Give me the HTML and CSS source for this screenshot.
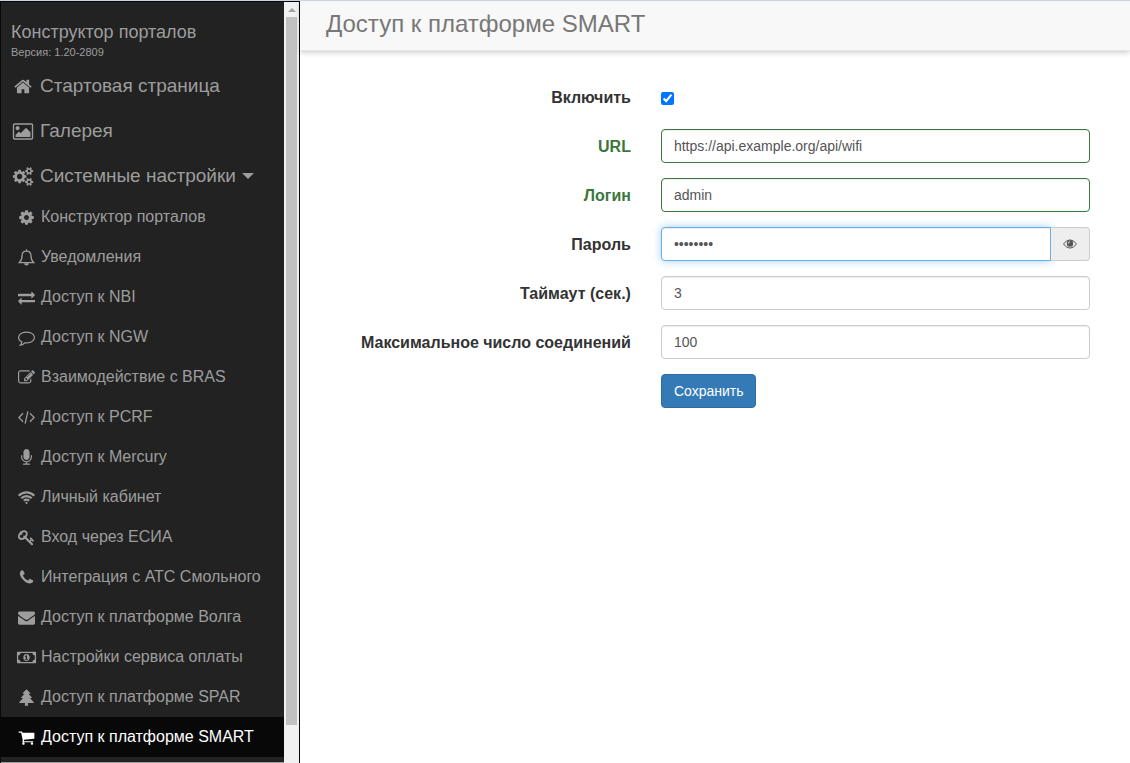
FILE: index.html
```
<!DOCTYPE html>
<html lang="ru">
<head>
    <meta charset="UTF-8">
    <meta name="viewport" content="width=device-width, initial-scale=1.0">
    <title>Доступ к платформе SMART</title>
    <link rel="stylesheet" href="styles.css">
</head>
<body>
    <aside class="sidebar">
        <nav class="sidebar-nav">
            <div class="brand">
                <a href="#" class="brand-name">Конструктор порталов</a>
                <div class="brand-version">Версия: 1.20-2809</div>
            </div>

            <ul class="menu">
                <li><a href="#"><svg class="icon" viewBox="0 0 1792 1792"><path d="M1472 992v480q0 26-19 45t-45 19h-384v-384h-256v384h-384q-26 0-45-19t-19-45v-480q0-1 .5-3t.5-3l575-474 575 474q1 2 1 6zm223-69l-62 74q-8 9-21 11h-3q-13 0-21-7l-692-577-692 577q-12 8-24 7-13-2-21-11l-62-74q-8-10-7-23.5t11-21.5l719-599q32-26 76-26t76 26l244 204v-195q0-14 9-23t23-9h192q14 0 23 9t9 23v408l219 182q10 8 11 21.5t-7 23.5z"/></svg>Стартовая страница</a></li>
                <li><a href="#"><svg class="icon" viewBox="0 0 1920 1792"><path d="M640 576q0 80-56 136t-136 56-136-56-56-136 56-136 136-56 136 56 56 136zm1024 384v448h-1408v-192l320-320 160 160 512-512zm96-704h-1600q-13 0-22.5 9.5t-9.5 22.5v1216q0 13 9.5 22.5t22.5 9.5h1600q13 0 22.5-9.5t9.5-22.5v-1216q0-13-9.5-22.5t-22.5-9.5zm160 32v1216q0 66-47 113t-113 47h-1600q-66 0-113-47t-47-113v-1216q0-66 47-113t113-47h1600q66 0 113 47t47 113z"/></svg>Галерея</a></li>
                <li><a href="#"><svg class="icon" viewBox="0 0 1920 1792"><path d="M896 896q0-106-75-181t-181-75-181 75-75 181 75 181 181 75 181-75 75-181zm768 512q0-52-38-90t-90-38-90 38-38 90q0 53 37.5 90.5t90.5 37.5 90.5-37.5 37.5-90.5zm0-1024q0-52-38-90t-90-38-90 38-38 90q0 53 37.5 90.5t90.5 37.5 90.5-37.5 37.5-90.5zm-384 421v185q0 10-7 19.5t-16 10.5l-155 24q-11 35-32 76 34 48 90 115 7 11 7 20 0 12-7 19-23 30-82.5 89.5t-78.5 59.5q-11 0-21-7l-115-90q-37 19-77 31-11 108-23 155-7 24-30 24h-186q-11 0-20-7.5t-10-17.5l-23-153q-34-10-75-31l-118 89q-7 7-20 7-11 0-21-8-144-133-144-160 0-9 7-19 10-14 41-53t47-61q-23-44-35-82l-152-24q-10-1-17-9.5t-7-19.5v-185q0-10 7-19.5t16-10.5l155-24q11-35 32-76-34-48-90-115-7-11-7-20 0-12 7-20 22-30 82-89t79-59q11 0 21 7l115 90q34-18 77-32 11-108 23-154 7-24 30-24h186q11 0 20 7.5t10 17.5l23 153q34 10 75 31l118-89q8-7 20-7 11 0 21 8 144 133 144 160 0 8-7 19-12 16-42 54t-45 60q23 48 34 82l152 23q10 2 17 10.5t7 19.5zm640 533v140q0 16-149 31-12 27-30 52 51 113 51 138 0 4-4 7-122 71-124 71-8 0-46-47t-52-68q-20 2-30 2t-30-2q-14 21-52 68t-46 47q-2 0-124-71-4-3-4-7 0-25 51-138-18-25-30-52-149-15-149-31v-140q0-16 149-31 13-29 30-52-51-113-51-138 0-4 4-7 4-2 35-20t59-34 30-16q8 0 46 46.5t52 67.5q20-2 30-2t30 2q51-71 92-112l6-2q4 0 124 70 4 3 4 7 0 25-51 138 17 23 30 52 149 15 149 31zm0-1024v140q0 16-149 31-12 27-30 52 51 113 51 138 0 4-4 7-122 71-124 71-8 0-46-47t-52-68q-20 2-30 2t-30-2q-14 21-52 68t-46 47q-2 0-124-71-4-3-4-7 0-25 51-138-18-25-30-52-149-15-149-31v-140q0-16 149-31 13-29 30-52-51-113-51-138 0-4 4-7 4-2 35-20t59-34 30-16q8 0 46 46.5t52 67.5q20-2 30-2t30 2q51-71 92-112l6-2q4 0 124 70 4 3 4 7 0 25-51 138 17 23 30 52 149 15 149 31z"/></svg>Системные настройки<span class="caret"></span></a></li>
            </ul>

            <ul class="submenu">
                <li><a href="#"><svg class="icon" viewBox="0 0 1792 1792"><path d="M1152 896q0-106-75-181t-181-75-181 75-75 181 75 181 181 75 181-75 75-181zm512-109v222q0 12-8 23t-20 13l-185 28q-19 54-39 91 35 50 107 138 10 12 10 25t-9 23q-27 37-99 108t-94 71q-12 0-26-9l-138-108q-44 23-91 38-16 136-29 186-7 28-36 28h-222q-14 0-24.5-8.5t-11.5-21.5l-28-184q-49-16-90-37l-141 107q-10 9-25 9-14 0-25-11-126-114-165-168-7-10-7-23 0-12 8-23 15-21 51-66.5t54-70.5q-27-50-41-99l-183-27q-13-2-21-12.5t-8-23.5v-222q0-12 8-23t19-13l186-28q14-46 39-92-40-57-107-138-10-12-10-24 0-10 9-23 26-36 98.5-107.5t94.5-71.5q13 0 26 10l138 107q44-23 91-38 16-136 29-186 7-28 36-28h222q14 0 24.5 8.5t11.5 21.5l28 184q49 16 90 37l142-107q9-9 24-9 13 0 25 10 129 119 165 170 7 8 7 22 0 12-8 23-15 21-51 66.5t-54 70.5q26 50 41 98l183 28q13 2 21 12.5t8 23.5z"/></svg>Конструктор порталов</a></li>
                <li><a href="#"><svg class="icon" viewBox="0 0 16 16"><path class="line" d="M8 .3v1.6M1.200 12.900c2-1.800 2.600-4.100 2.600-6.500C3.800 3.800 5.600 2 8 2s4.200 1.800 4.200 4.400c0 2.400.6 4.700 2.600 6.500z"/><path d="M5.800 13.300h4.400a2.200 2.200 0 0 1-4.400 0z"/></svg>Уведомления</a></li>
                <li><a href="#"><svg class="icon" viewBox="0 0 1792 1792"><path d="M1792 1184v192q0 13-9.500 22.500t-22.500 9.500h-1376v192q0 13-9.500 22.500t-22.500 9.500q-12 0-24-10l-319-320q-9-9-9-22 0-14 9-23l320-320q9-9 23-9 13 0 22.500 9.500t9.500 22.500v192h1376q13 0 22.500 9.500t9.500 22.500zm0-544q0 14-9 23l-320 320q-9 9-23 9-13 0-22.500-9.500t-9.500-22.500v-192h-1376q-13 0-22.500-9.500t-9.500-22.500v-192q0-13 9.500-22.500t22.500-9.500h1376v-192q0-14 9-23t23-9q12 0 24 10l319 319q9 9 9 23z"/></svg>Доступ к NBI</a></li>
                <li><a href="#"><svg class="icon" viewBox="0 0 1792 1792"><path d="M896 384q-204 0-381.500 69.500t-282 187.500-104.500 255q0 112 71.500 213.500t201.500 175.500l87 50-27 96q-24 91-70 172 152-63 275-171l43-38 57 6q69 8 130 8 204 0 381.500-69.500t282-187.500 104.500-255-104.500-255-282-187.500-381.500-69.500zm896 512q0 174-120 321.500t-326 233-450 85.500q-70 0-145-8-198 175-460 242-49 14-114 22h-5q-15 0-27-10.500t-16-27.500v-1q-3-4-.5-12t2-10 4.500-9.500l6-9 7-8.500 8-9q7-8 31-34.500t34.500-38 31-39.500 32.500-51 27-59 26-76q-157-89-247.500-220t-90.500-281q0-174 120-321.500t326-233 450-85.500 450 85.500 326 233 120 321.500z"/></svg>Доступ к NGW</a></li>
                <li><a href="#"><svg class="icon" viewBox="0 0 1792 1792"><path d="M888 1184l116-116-152-152-116 116v56h96v96h56zm440-720q-16-16-33 1l-350 350q-17 17-1 33t33-1l350-350q17-17 1-33zm80 594v190q0 119-84.500 203.500t-203.500 84.500h-832q-119 0-203.500-84.500t-84.500-203.500v-832q0-119 84.500-203.500t203.500-84.500h832q63 0 117 25 15 7 18 23 3 17-9 29l-49 49q-14 14-32 8-23-6-45-6h-832q-66 0-113 47t-47 113v832q0 66 47 113t113 47h832q66 0 113-47t47-113v-126q0-13 9-22l64-64q15-15 35-7t20 29zm-96-738l288 288-672 672h-288v-288zm444 132l-92 92-288-288 92-92q28-28 68-28t68 28l152 152q28 28 28 68t-28 68z"/></svg>Взаимодействие с BRAS</a></li>
                <li><a href="#"><svg class="icon" viewBox="0 0 16 16"><path class="line" d="M4.800 4L.8 8l4 4M11.200 4l4 4-4 4M9.300 2.200L6.700 13.800"/></svg>Доступ к PCRF</a></li>
                <li><a href="#"><svg class="icon" viewBox="0 0 1792 1792"><path d="M1472 704v128q0 221-147.500 384.500t-364.500 187.500v132h256q26 0 45 19t19 45-19 45-45 19h-640q-26 0-45-19t-19-45 19-45 45-19h256v-132q-217-24-364.500-187.500t-147.500-384.500v-128q0-26 19-45t45-19 45 19 19 45v128q0 185 131.500 316.500t316.500 131.500 316.500-131.500 131.500-316.500v-128q0-26 19-45t45-19 45 19 19 45zm-256-384v512q0 132-94 226t-226 94-226-94-94-226v-512q0-132 94-226t226-94 226 94 94 226z"/></svg>Доступ к Mercury</a></li>
                <li><a href="#"><svg class="icon" viewBox="0 0 16 16"><path class="line wave" d="M.7 6.300Q3.800 3.100 8 3.100t7.300 3.200M3.100 8.700Q5.200 6.600 8 6.600t4.900 2.100M5.500 11.100Q6.600 10.100 8 10.100t2.500 1"/><path d="M8 11.900l1.400 1.100L8 14.400 6.600 13z"/></svg>Личный кабинет</a></li>
                <li><a href="#"><svg class="icon" viewBox="0 0 1792 1792"><path d="M832 512q0-80-56-136t-136-56-136 56-56 136q0 42 19 83-41-19-83-19-80 0-136 56t-56 136 56 136 136 56 136-56 56-136q0-42-19-83 41 19 83 19 80 0 136-56t56-136zm851 704q0 17-49 66t-66 49q-9 0-28.500-16t-36.500-33-38.500-40-24.500-26l-96 96 220 220q28 28 28 68 0 42-39 81t-81 39q-40 0-68-28l-671-671q-176 131-365 131-163 0-265.500-102.500t-102.500-265.500q0-160 95-313t248-248 313-95q163 0 265.500 102.500t102.500 265.500q0 189-131 365l355 355 96-96q-3-3-26-24.500t-40-38.500-33-36.500-16-28.500q0-17 49-66t66-49q13 0 23 10 6 6 46 44.500t82 79.500 86.500 86 73 78 28.500 41z"/></svg>Вход через ЕСИА</a></li>
                <li><a href="#"><svg class="icon" viewBox="0 0 1792 1792"><path d="M1600 1240q0 27-10 70.500t-21 68.500q-21 50-122 106-94 51-186 51-27 0-53-3.500t-57.500-12.500-47-14.500-55.500-20.500-49-18q-98-35-175-83-127-79-264-216t-216-264q-48-77-83-175-3-9-18-49t-20.500-55.500-14.500-47-12.500-57.500-3.500-53q0-92 51-186 56-101 106-122 25-11 68.500-21t70.500-10q14 0 21 3 18 6 53 76 11 19 30 54t35 63.500 31 53.500q3 4 17.500 25t21.500 35.500 7 28.500q0 20-28.500 50t-62 55-62 53-28.500 46q0 9 5 22.500t8.500 20.500 14 24 11.500 19q76 137 174 235t235 174q2 1 19 11.500t24 14 20.500 8.500 22.500 5q18 0 46-28.500t53-62 55-62 50-28.500q14 0 28.500 7t35.500 21.500 25 17.500q25 15 53.500 31t63.500 35 54 30q70 35 76 53 3 7 3 21z"/></svg>Интеграция с АТС Смольного</a></li>
                <li><a href="#"><svg class="icon" viewBox="0 0 1792 1792"><path d="M1792 710v794q0 66-47 113t-113 47h-1472q-66 0-113-47t-47-113v-794q44 49 101 87 362 246 497 345 57 42 92.500 65.500t94.500 48 110 24.500h2q51 0 110-24.500t94.500-48 92.500-65.500q170-123 498-345 57-39 100-87zm0-294q0 79-49 151t-122 123q-376 261-468 325-10 7-42.500 31t-54 38.500-52 32.500-57.500 27-50 9h-2q-23 0-50-9t-57.500-27-52-32.500-54-38.500-42.500-31q-91-64-262-182.500t-205-142.500q-62-42-117-115.500t-55-136.500q0-78 41.500-130t118.500-52h1472q65 0 112.500 47t47.500 113z"/></svg>Доступ к платформе Волга</a></li>
                <li><a href="#"><svg class="icon" viewBox="0 0 18 16"><path fill-rule="evenodd" d="M.6 2.600h16.800q.6 0 .6.6v9.600q0 .6-.6.6H.6q-.6 0-.6-.6V3.200q0-.6.6-.6zM3.500 3.800Q3.300 5.900 1.200 6.100v3.800q2.100.2 2.300 2.300h11q.2-2.100 2.300-2.300V6.100q-2.100-.2-2.300-2.300zM9 4.600c2 0 3 1.600 3 3.400s-1 3.400-3 3.400S6 9.800 6 8s1-3.400 3-3.400zM7.300 6.800l.6.700.4-.3v2.200h-.9v.8h3v-.8h-.9V5.800h-.9z"/></svg>Настройки сервиса оплаты</a></li>
                <li><a href="#"><svg class="icon" viewBox="0 0 16 16"><path d="M8 .2l3.700 3.700-.3.600H9.900l3.200 3.400-.3.600h-1.600l3.700 3.900-.3.800H9.300l.3 2.500H6.400l.3-2.500H1.400l-.3-.8 3.700-3.900H3.200l-.3-.6 3.200-3.400H4.600l-.3-.6z"/></svg>Доступ к платформе SPAR</a></li>
                <li class="active"><a href="#"><svg class="icon" viewBox="0 0 1792 1792"><path d="M704 1536q0 52-38 90t-90 38-90-38-38-90 38-90 90-38 90 38 38 90zm896 0q0 52-38 90t-90 38-90-38-38-90 38-90 90-38 90 38 38 90zm128-1088v512q0 24-16.500 42.500t-40.500 21.500l-1044 122q13 60 13 70 0 16-24 64h920q26 0 45 19t19 45-19 45-45 19h-1024q-26 0-45-19t-19-45q0-11 8-31.500t16-36 21.500-40 15.500-29.500l-177-823h-204q-26 0-45-19t-19-45 19-45 45-19h256q16 0 28.500 6.500t19.500 15.500 13 24.500 8 26 5.500 29.500 4.500 26h1201q26 0 45 19t19 45z"/></svg>Доступ к платформе SMART</a></li>
            </ul>
            <div class="divider"></div>
        </nav>
        <div class="scrollbar">
            <span class="scroll-arrow"></span>
            <span class="scroll-thumb"></span>
        </div>
    </aside>

    <main class="content">
        <header class="page-header">
            <h1>Доступ к платформе SMART</h1>
        </header>

        <form class="settings-form" id="smartForm">
            <div class="form-group">
                <label for="enabled">Включить</label>
                <div class="field"><input type="checkbox" id="enabled" checked></div>
            </div>
            <div class="form-group has-success">
                <label for="url">URL</label>
                <div class="field"><input type="text" class="form-control" id="url" value="https://api.example.org/api/wifi"></div>
            </div>
            <div class="form-group has-success">
                <label for="login">Логин</label>
                <div class="field"><input type="text" class="form-control" id="login" value="admin"></div>
            </div>
            <div class="form-group">
                <label for="password">Пароль</label>
                <div class="field input-group">
                    <input type="password" class="form-control focused" id="password" value="password">
                    <button type="button" class="addon" aria-label="Показать пароль">
                        <svg class="eye" viewBox="0 0 14 14"><path class="eye-outline" d="M.5 7Q3.200 2.900 7 2.900T13.500 7Q10.800 11.100 7 11.100T.5 7z"/><path fill-rule="evenodd" d="M7 3.300a3.200 3.200 0 1 1 0 6.400 3.200 3.200 0 0 1 0-6.400zM5 6.600h.9q0-1 1-1.300V4.300Q5.100 4.600 5 6.600z"/></svg>
                    </button>
                </div>
            </div>
            <div class="form-group">
                <label for="timeout">Таймаут (сек.)</label>
                <div class="field"><input type="text" class="form-control" id="timeout" value="3"></div>
            </div>
            <div class="form-group">
                <label for="maxConnections">Максимальное число соединений</label>
                <div class="field"><input type="text" class="form-control" id="maxConnections" value="100"></div>
            </div>
            <div class="form-actions">
                <button type="submit" class="btn-primary">Сохранить</button>
            </div>
        </form>
    </main>
</body>
</html>
```

FILE: styles.css
```
* {
    box-sizing: border-box;
}

body {
    margin: 0;
    display: flex;
    height: 100vh;
    overflow: hidden;
    border-top: 1px solid #ccd3e6;
    background-color: #fff;
    color: #333;
    font-family: "Liberation Sans", Arial, sans-serif;
    font-size: 16px;
    line-height: 20px;
}

.sidebar {
    display: flex;
    flex: 0 0 300px;
    overflow: hidden;
    border: 1px solid #080808;
    border-bottom: 0;
    background-color: #222;
}

.sidebar-nav {
    flex: 1;
    overflow: hidden;
}

.sidebar a {
    color: #9d9d9d;
    text-decoration: none;
}

.brand {
    padding: 20px 10px 4px;
    color: #9d9d9d;
}

.brand-name {
    font-size: 18px;
}

.brand-version {
    font-size: 11px;
    line-height: 18px;
}

.menu,
.submenu {
    display: flex;
    flex-direction: column;
    margin: 0;
    padding: 0;
    list-style: none;
}

.menu {
    gap: 3px;
}

.menu a,
.submenu a {
    display: flex;
    align-items: center;
    white-space: nowrap;
}

.menu a {
    padding: 10px;
    font-size: 19px;
    line-height: 22px;
}

.submenu a {
    padding: 10px 15px;
}

.icon {
    flex: none;
    fill: currentColor;
}

.menu .icon {
    width: 24px;
    height: 19px;
    margin-right: 5px;
}

.submenu .icon {
    width: 21px;
    height: 17px;
    margin-right: 4px;
}

.icon .line {
    fill: none;
    stroke: currentColor;
    stroke-width: 1.2;
}

.icon .wave {
    stroke-width: 2.1;
}

.submenu .active a {
    background-color: #080808;
    color: #fff;
}

.caret {
    margin-left: 6px;
    border-top: 6px solid;
    border-right: 6px solid transparent;
    border-left: 6px solid transparent;
}

.divider {
    height: 1px;
    margin-top: 5px;
    background-color: #9d9d9d;
}

.scrollbar {
    display: flex;
    flex-direction: column;
    align-items: center;
    flex: 0 0 15px;
    background-color: #f1f1f1;
}

.scroll-arrow {
    margin: 6px 0 5px;
    border-bottom: 4px solid #a3a3a3;
    border-right: 4px solid transparent;
    border-left: 4px solid transparent;
}

.scroll-thumb {
    width: 11px;
    height: 93%;
    background-color: #c1c1c1;
}

.content {
    flex: 1;
    min-width: 0;
}

.page-header {
    padding: 8px 26px 11px;
    border-bottom: 1px solid #e7e7e7;
    background-color: #f8f8f8;
    box-shadow: 0 2px 5px rgba(0, 0, 0, 0.18);
}

.page-header h1 {
    margin: 0;
    color: #777;
    font-size: 24px;
    font-weight: normal;
    line-height: 30px;
}

.settings-form {
    padding: 29px 25px 0 18px;
}

.form-group {
    display: grid;
    grid-template-columns: 5fr 7fr;
    align-items: center;
    min-height: 34px;
    margin-bottom: 15px;
}

.form-group label {
    padding: 2px 15px 0;
    font-weight: bold;
    text-align: right;
}

.field {
    display: flex;
    padding: 0 15px;
}

input[type="checkbox"] {
    width: 13px;
    height: 13px;
    margin: 2px 0 0;
}

.form-control {
    flex: 1;
    min-width: 0;
    height: 34px;
    padding: 6px 12px;
    border: 1px solid #ccc;
    border-radius: 4px;
    outline: none;
    background-color: #fff;
    box-shadow: inset 0 1px 1px rgba(0, 0, 0, 0.075);
    color: #555;
    font-family: inherit;
    font-size: 14px;
}

.has-success label {
    color: #3c763d;
}

.has-success .form-control {
    border-color: #3c763d;
}

.focused,
.form-control:focus {
    border-color: #66afe9;
    box-shadow: inset 0 1px 1px rgba(0, 0, 0, 0.075), 0 0 8px rgba(102, 175, 233, 0.6);
}

.input-group .form-control {
    border-radius: 4px 0 0 4px;
}

.addon {
    display: flex;
    align-items: center;
    padding: 0 12px;
    border: 1px solid #ccc;
    border-left: 0;
    border-radius: 0 4px 4px 0;
    background-color: #eee;
    color: #555;
}

.eye {
    width: 14px;
    height: 14px;
    fill: currentColor;
}

.eye-outline {
    fill: none;
    stroke: currentColor;
    stroke-width: 1;
}

.form-actions {
    display: grid;
    grid-template-columns: 5fr 7fr;
}

.btn-primary {
    grid-column: 2;
    justify-self: start;
    height: 34px;
    margin-left: 15px;
    padding: 6px 12px;
    border: 1px solid #2e6da4;
    border-radius: 4px;
    background-color: #337ab7;
    color: #fff;
    font-family: inherit;
    font-size: 14px;
    line-height: 20px;
    cursor: pointer;
}
```
